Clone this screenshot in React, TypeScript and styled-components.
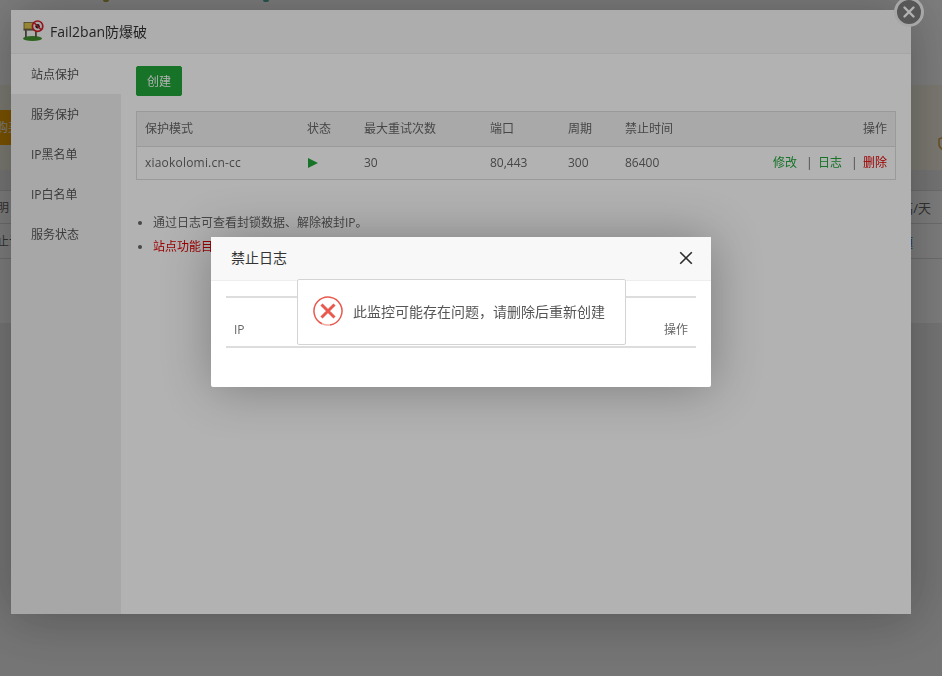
import React from "react";
import styled, { createGlobalStyle } from "styled-components";

const Global = createGlobalStyle`
  html, body { margin: 0; padding: 0; height: 100%; overflow: hidden; background: #eee; }
  body { font-family: "Open Sans", "Noto Sans CJK SC", sans-serif; font-size: 12px; color: #666; }
  * { box-sizing: border-box; }
`;

const Page = styled.div`
  width: 942px;
  height: 676px;
  overflow: hidden;
  display: flex;
  flex-direction: column;
  background: #eee;
`;
const TopBar = styled.div`
  height: 85px;
  background: #fff;
  display: flex;
  gap: 154px;
  padding-left: 103px;
  align-items: flex-start;
`;
const TopDot = styled.span<{ $tone: string }>`
  width: 6px;
  height: 2px;
  border-radius: 0 0 3px 3px;
  background: ${(p) => p.$tone};
`;
const Notice = styled.div`
  height: 85px;
  background: #fbf7e6;
  display: flex;
  align-items: center;
  justify-content: space-between;
`;
const BuyButton = styled.div`
  height: 35px;
  margin-left: -28px;
  padding-right: 3px;
  background: #f7a800;
  color: #fff;
  font-size: 12px;
  line-height: 35px;
  white-space: nowrap;
`;
const ShieldMark = styled.svg`
  width: 12px;
  height: 15px;
  margin-right: -8px;
  margin-top: 32px;
`;
const InfoRow = styled.div<{ $first?: boolean; $tall?: boolean }>`
  height: ${(p) => (p.$tall ? "35px" : "33px")};
  background: #fff;
  border-top: 1px solid #ddd;
  display: flex;
  align-items: center;
  justify-content: space-between;
  margin-top: ${(p) => (p.$first ? "20px" : "0")};
`;
const LeftCut = styled.span`
  margin-left: -15px;
  color: #666;
`;
const RightCut = styled.span<{ $end: number; $link?: boolean }>`
  margin-right: ${(p) => p.$end}px;
  color: ${(p) => (p.$link ? "#2a6fd0" : "#666")};
  font-size: 13px;
`;
const RowEnd = styled.div`
  height: 65px;
  border-top: 1px solid #ddd;
  background: #fff;
`;

const Shade = styled.div`
  position: fixed;
  inset: 0;
  background: rgba(0, 0, 0, 0.3);
`;

const Panel = styled.section`
  position: fixed;
  left: 11px;
  top: 10px;
  width: 900px;
  height: 604px;
  background: #fff;
  box-shadow: 1px 1px 50px rgba(0, 0, 0, 0.3);
  display: flex;
  flex-direction: column;
`;
const PanelHead = styled.header`
  height: 44px;
  flex: none;
  background: #f8f8f8;
  border-bottom: 1px solid #eee;
  display: flex;
  align-items: center;
  gap: 4px;
  padding: 0 0 2px 11px;
  font-size: 14px;
  color: #333;
`;
const PanelClose = styled.button`
  position: absolute;
  right: -13px;
  top: -13px;
  width: 30px;
  height: 30px;
  padding: 0;
  border-radius: 50%;
  border: 3px solid #f0f0f0;
  background: #7d7d7d;
  display: flex;
  align-items: center;
  justify-content: center;
`;
const PanelBody = styled.div`
  flex: 1;
  display: flex;
  min-height: 0;
`;
const Side = styled.nav`
  width: 110px;
  flex: none;
  background: #f0f0f0;
`;
const SideItem = styled.div<{ $active?: boolean }>`
  height: 40px;
  line-height: 42px;
  padding-left: 20px;
  color: #555;
  background: ${(p) => (p.$active ? "#fff" : "transparent")};
`;
const Content = styled.div`
  flex: 1;
  padding: 12px 15px;
`;
const Create = styled.button`
  display: block;
  width: 46px;
  height: 30px;
  border: 1px solid #20a53a;
  border-radius: 2px;
  padding: 0;
  background: #20a53a;
  color: #fff;
  font: inherit;
`;
const Table = styled.div`
  margin-top: 15px;
  border: 1px solid #ddd;
`;
const Row = styled.div<{ $head?: boolean }>`
  height: ${(p) => (p.$head ? "35px" : "32px")};
  display: grid;
  grid-template-columns: 162px 57px 126px 78px 57px 1fr auto;
  align-items: center;
  padding: 0 8px 2px;
  background: ${(p) => (p.$head ? "#f2f2f2" : "#fff")};
  border-bottom: ${(p) => (p.$head ? "1px solid #ddd" : "0")};
`;
const SiteName = styled.span`
  letter-spacing: 0.2px;
`;
const Play = styled.span`
  width: 0;
  height: 0;
  margin: 1px 0 0 1px;
  border-left: 10px solid #20a53a;
  border-top: 5.5px solid transparent;
  border-bottom: 5.5px solid transparent;
`;
const Ops = styled.div`
  display: flex;
  align-items: center;
`;
const OpLink = styled.span<{ $red?: boolean }>`
  color: ${(p) => (p.$red ? "#e00000" : "#20a53a")};
`;
const Sep = styled.span`
  width: 21px;
  padding-left: 9px;
  color: #666;
`;
const Notes = styled.ul`
  margin: 31px 0 0;
  padding: 0 0 0 17px;
  line-height: 24px;
`;
const Note = styled.li<{ $red?: boolean }>`
  color: ${(p) => (p.$red ? "#e00000" : "#666")};
  &::marker { color: #666; }
`;

const Dialog = styled.section`
  position: fixed;
  left: 211px;
  top: 237px;
  width: 500px;
  height: 150px;
  background: #fff;
  border-radius: 2px;
  box-shadow: 1px 1px 50px rgba(0, 0, 0, 0.3);
`;
const DialogHead = styled.header`
  height: 44px;
  background: #f8f8f8;
  border-bottom: 1px solid #eee;
  display: flex;
  align-items: center;
  justify-content: space-between;
  padding: 0 18px 2px 20px;
  font-size: 14px;
  color: #333;
`;
const DialogTitle = styled.span`
  margin-bottom: 2px;
`;
const DialogBody = styled.div`
  padding: 15px 15px 0;
`;
const LogHead = styled.div`
  height: 52px;
  border-top: 2px solid #ddd;
  border-bottom: 2px solid #ddd;
  display: flex;
  align-items: center;
  justify-content: space-between;
  padding: 14px 8px 0;
  color: #666;
`;
const Toast = styled.div`
  position: fixed;
  left: 297px;
  top: 279px;
  width: 329px;
  height: 66px;
  background: #fff;
  border: 1px solid #d3d4d3;
  border-radius: 2px;
  display: flex;
  align-items: center;
  gap: 10px;
  padding: 0 0 2px 15px;
  font-size: 14px;
  color: #555;
`;

const Logo = () => (
  <svg width="24" height="24" viewBox="0 0 24 24">
    <ellipse cx="10.5" cy="19.5" rx="9.5" ry="2.4" fill="#3f8f2c" />
    <rect x="3" y="10" width="1.8" height="8.5" fill="#5f5a48" />
    <rect x="13" y="10" width="1.8" height="8.5" fill="#5f5a48" />
    <rect x="1.5" y="10" width="13.5" height="1.6" fill="#6a6350" />
    <rect x="2" y="3.5" width="10" height="6.5" fill="#d9c04a" stroke="#6b6238" strokeWidth="0.8" />
    <circle cx="15.6" cy="7.2" r="5.2" fill="#f4f0f0" stroke="#d3202a" strokeWidth="1.7" />
    <circle cx="15.6" cy="7.2" r="2.2" fill="#222" />
    <path d="M12 3.6 19.2 10.8" stroke="#d3202a" strokeWidth="1.5" />
  </svg>
);

const CloseGlyph = () => (
  <svg width="14" height="14" viewBox="0 0 14 14">
    <path d="M2.5 2.5 11.5 11.5M11.5 2.5 2.5 11.5" stroke="#fff" strokeWidth="2.4" strokeLinecap="round" />
  </svg>
);

const XGlyph = () => (
  <svg width="14" height="14" viewBox="0 0 14 14">
    <path d="M1.2 1.2 12.8 12.8M12.8 1.2 1.2 12.8" stroke="#2b2b2b" strokeWidth="1.6" />
  </svg>
);

const ErrorIcon = () => (
  <svg width="30" height="30" viewBox="0 0 30 30">
    <path d="M9 27.7A14 14 0 1 1 17 28.9" fill="none" stroke="#e9594d" strokeWidth="1.5" />
    <path d="M17 28.9A14 14 0 0 1 9 27.7" fill="none" stroke="#f3aaa4" strokeWidth="1.5" />
    <path d="M8.5 8.5 21.5 21.5M21.5 8.5 8.5 21.5" stroke="#e9594d" strokeWidth="3" />
  </svg>
);

export default function App() {
  return (
    <>
      <Global />
      <Page>
        <TopBar>
          <TopDot $tone="#b5a642" />
          <TopDot $tone="#4fb0a0" />
        </TopBar>
        <Notice>
          <BuyButton>立即购买</BuyButton>
          <ShieldMark viewBox="0 0 12 15">
            <path d="M6 1 11 3v5c0 3-2 5-5 6-3-1-5-3-5-6V3z" fill="none" stroke="#d6a24a" strokeWidth="1.5" />
          </ShieldMark>
        </Notice>
        <InfoRow $first>
          <LeftCut>说明</LeftCut>
          <RightCut $end={11}>高/天</RightCut>
        </InfoRow>
        <InfoRow $tall>
          <LeftCut>禁止访问</LeftCut>
          <RightCut $end={29} $link>题</RightCut>
        </InfoRow>
        <RowEnd />
      </Page>
      <Shade />
      <Panel>
        <PanelHead>
          <Logo />
          <span>Fail2ban防爆破</span>
        </PanelHead>
        <PanelClose aria-label="关闭">
          <CloseGlyph />
        </PanelClose>
        <PanelBody>
          <Side>
            <SideItem $active>站点保护</SideItem>
            <SideItem>服务保护</SideItem>
            <SideItem>IP黑名单</SideItem>
            <SideItem>IP白名单</SideItem>
            <SideItem>服务状态</SideItem>
          </Side>
          <Content>
            <Create>创建</Create>
            <Table>
              <Row $head>
                <span>保护模式</span>
                <span>状态</span>
                <span>最大重试次数</span>
                <span>端口</span>
                <span>周期</span>
                <span>禁止时间</span>
                <span>操作</span>
              </Row>
              <Row>
                <SiteName>xiaokolomi.cn-cc</SiteName>
                <Play />
                <span>30</span>
                <span>80,443</span>
                <span>300</span>
                <span>86400</span>
                <Ops>
                  <OpLink>修改</OpLink>
                  <Sep>|</Sep>
                  <OpLink>日志</OpLink>
                  <Sep>|</Sep>
                  <OpLink $red>删除</OpLink>
                </Ops>
              </Row>
            </Table>
            <Notes>
              <Note>通过日志可查看封锁数据、解除被封IP。</Note>
              <Note $red>站点功能目前仅支持部分类型的站点</Note>
            </Notes>
          </Content>
        </PanelBody>
      </Panel>
      <Shade />
      <Dialog>
        <DialogHead>
          <DialogTitle>禁止日志</DialogTitle>
          <XGlyph />
        </DialogHead>
        <DialogBody>
          <LogHead>
            <span>IP</span>
            <span>操作</span>
          </LogHead>
        </DialogBody>
      </Dialog>
      <Toast>
        <ErrorIcon />
        <span>此监控可能存在问题，请删除后重新创建</span>
      </Toast>
    </>
  );
}
